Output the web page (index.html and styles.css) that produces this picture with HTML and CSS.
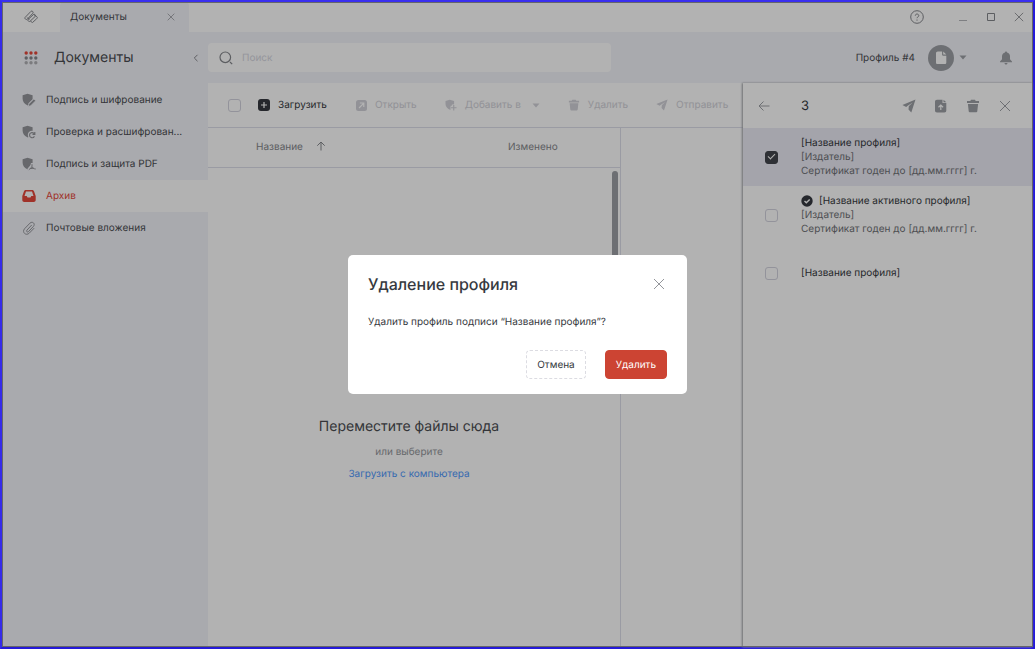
FILE: index.html
```html
<!DOCTYPE html>
<html lang="ru">
<head>
<meta charset="utf-8">
<meta name="viewport" content="width=device-width, initial-scale=1">
<title>Документы</title>
<link rel="stylesheet" href="styles.css">
</head>
<body>
<svg class="sprite" aria-hidden="true">
  <symbol id="shield" viewBox="0 0 14 14"><path d="M5.500 .8 10.600 2.300V6.200L6.300 10.500 7.300 11.600 5.800 12.600C2.500 11 .6 8.800 .6 5.800V2.300Z"/></symbol>
  <symbol id="trash" viewBox="0 0 14 14"><path d="M5 .8h4l.7 1.200H13v2H1V2h3.300zM1.900 5h10.200l-.8 7.200c-.1.700-.6 1.100-1.300 1.100H4c-.7 0-1.200-.4-1.300-1.100z"/></symbol>
  <symbol id="send" viewBox="0 0 14 14"><path d="M13.500.6 9.300 13.400 6.500 10.600 6.800 7.200 10.600 3.400 5.700 6.700 4.200 8 .4 5.900z"/></symbol>
  <symbol id="close" viewBox="0 0 12 12"><path d="m1 1 10 10M11 1 1 11" fill="none" stroke="currentColor"/></symbol>
  <symbol id="caret" viewBox="0 0 8 5"><path d="M.5.500h7L4 4.500z"/></symbol>
</svg>
<div class="app">
  <header class="chrome">
    <button class="home" aria-label="Главная"><svg class="i14 line" viewBox="0 0 14 14"><path d="M1 7.500 7 1.300c1-1 2.900.7 1.900 1.900L3.200 9.300C2.300 10.200.2 8.500 1 7.500zM4 9.500l5.500-5c1-.8 2.700.8 1.800 1.800L6 11.300c-1 .8-2.900-.9-2-1.800zM9.500 4.500l3.300 2.200c1 .8.400 1.600-.2 2.100L8.500 12.500l-2-1.200M3.300 7.500l2 2"/></svg></button>
    <div class="tab"><span>Документы</span><button aria-label="Закрыть вкладку"><svg class="i8"><use href="#close"/></svg></button></div>
    <div class="window-buttons">
      <button class="help" aria-label="Справка"><svg class="i14 line" viewBox="0 0 14 14"><circle cx="7" cy="7" r="6.300"/><path d="M5.300 5.700c0-2.300 3.500-2.100 3.500 0 0 1.200-1.800 1.200-1.800 2.500M7 9.500v1.200"/></svg></button>
      <button class="minimize" aria-label="Свернуть"><svg class="i10 line" viewBox="0 0 10 10"><path d="M1 8.500h8"/></svg></button>
      <button aria-label="Развернуть"><svg class="i10 line" viewBox="0 0 10 10"><path d="M1.500 1.500h7v7h-7z"/></svg></button>
      <button aria-label="Закрыть"><svg class="i10"><use href="#close"/></svg></button>
    </div>
  </header>

  <div class="topbar">
    <div class="brand">
      <button class="apps" aria-label="Приложения"><svg class="i14" viewBox="0 0 14 14"><g fill="#e5483b"><circle cx="2.200" cy="2" r="1.700"/><circle cx="7" cy="2" r="1.700"/><circle cx="11.800" cy="2" r="1.700"/></g><g fill="#85878c"><circle cx="2.200" cy="7" r="1.700"/><circle cx="7" cy="7" r="1.700"/><circle cx="11.800" cy="7" r="1.700"/></g><g fill="#b0b1b5"><circle cx="2.200" cy="11.800" r="1.700"/><circle cx="7" cy="11.800" r="1.700"/><circle cx="11.800" cy="11.800" r="1.700"/></g></svg></button>
      <h1>Документы</h1>
      <button class="collapse" aria-label="Свернуть меню"><svg class="i8 line" viewBox="0 0 8 8"><path d="M5.500.800 2.300 4l3.200 3.200"/></svg></button>
    </div>
    <label class="search"><svg class="i14 line" viewBox="0 0 14 14"><circle cx="6.300" cy="6.300" r="5.300" stroke-width="1.200"/><path stroke-width="1.200" d="m11 11 2.200 2.200"/></svg><input type="search" placeholder="Поиск" aria-label="Поиск"></label>
    <div class="account">
      <button class="profile"><span>Профиль #4</span><span class="avatar"><svg class="i14" viewBox="0 0 14 14"><path fill="#fff" d="M3.800.500h4.300v3c0 .8.400 1.200 1.200 1.200h3v6.800c0 1-.6 1.600-1.600 1.600H3.600c-1 0-1.600-.6-1.600-1.600V2.300C2 1.200 2.800.5 3.800.5zM9.200.5l3.100 3.100H9.200z"/></svg></span><svg class="caret"><use href="#caret"/></svg></button>
      <button aria-label="Уведомления"><svg class="i14" viewBox="0 0 14 14"><path d="M7 .4c.6 0 1 .4 1 1C10 1.900 11 3.400 11 5.300v2.900l2 2.200v.8H1v-.8l2-2.200V5.300c0-1.900 1-3.400 3-3.900 0-.6.400-1 1-1zM5.500 12h3c-.2 2-2.800 2-3 0z"/></svg></button>
    </div>
  </div>

  <nav class="sidebar">
    <a href="#sign"><svg class="i14" viewBox="0 0 14 14"><use href="#shield" width="14" height="14"/><path stroke="#f3f4fa" stroke-width=".8" d="m6.800 10.900 5-5 1.900 1.900-5 5-2.400.6z"/></svg>Подпись и шифрование</a>
    <a href="#verify"><svg class="i14" viewBox="0 0 14 14"><use href="#shield" width="14" height="14"/><circle cx="10" cy="10" r="4.200" fill="#f3f4fa"/><path fill="none" stroke="currentColor" stroke-width="1.200" d="M12.500 9.200c-1-2.500-4.800-2-5 .8 0 3 3.800 3.700 4.900 1.200M12.800 7v2.400h-2.300"/></svg>Проверка и расшифрован...</a>
    <a href="#pdf"><svg class="i14" viewBox="0 0 14 14"><use href="#shield" width="14" height="14"/><path fill="#f3f4fa" d="M9 6h3v3l2 3v2H5.500v-2.500L8 10z"/><path fill="none" stroke="currentColor" d="M10 7.200v2.600l-3.200 3M10 9.800c.8 1.500 2 2 3.700 2.200M8 11.600l4-.4"/></svg>Подпись и защита PDF</a>
    <a class="active" href="#archive" aria-current="page"><svg class="i14" viewBox="0 0 14 14"><path fill-rule="evenodd" d="M4 1h6c1 0 1.600.5 2 1.300L13.700 7v4c0 1.300-.8 2-2 2H2.300c-1.300 0-2-.7-2-2V7L2 2.300C2.400 1.500 3 1 4 1zM4 2.400 2.500 7h2.200l.8 1.500h3L9.300 7h2.200L10 2.400z"/></svg>Архив</a>
    <a href="#mail"><svg class="i14 line" viewBox="0 0 14 14"><path d="m9.700 4-4.800 5.200c-1 1.200.5 2.500 1.600 1.400l5-5.300c2.100-2.500-1-5.500-3.500-3.200L2.500 7.800c-2.900 3.500 1.600 7.500 4.800 4.300l4.900-5"/></svg>Почтовые вложения</a>
  </nav>

  <main class="workspace">
    <div class="toolbar">
      <input type="checkbox" aria-label="Выбрать все">
      <button class="primary"><svg class="i12" viewBox="0 0 12 12"><rect width="12" height="12" rx="3"/><path stroke="#fff" stroke-width="1.200" d="M6 3v6M3 6h6"/></svg>Загрузить</button>
      <button disabled><svg class="i12" viewBox="0 0 12 12"><rect x="1" y="1" width="11" height="11" rx="2.500"/><path fill="none" stroke="#fff" stroke-width="1.200" d="m4 9 4.500-4.500M4.800 4h4v4"/></svg>Открыть</button>
      <button disabled><svg class="i12" viewBox="0 0 14 14"><use href="#shield" width="14" height="14"/><path stroke="#fff" stroke-width="4" d="M10 6.500v7M6.500 10h7"/><path stroke="currentColor" stroke-width="1.300" d="M10.200 7v6.500M7 10.200h6.500"/></svg>Добавить в<svg class="caret"><use href="#caret"/></svg></button>
      <button disabled><svg class="i12"><use href="#trash"/></svg>Удалить</button>
      <button disabled><svg class="i12"><use href="#send"/></svg>Отправить</button>
    </div>
    <div class="content">
      <section class="files">
        <table><thead><tr><th class="name">Название<svg class="i10 line" viewBox="0 0 10 10"><path d="M5 9.500V1M1.300 4.700 5 1l3.700 3.700"/></svg></th><th>Изменено</th></tr></thead></table>
        <div class="drop">
          <svg class="drop-icon" viewBox="0 0 60 60"><path fill="#f3f4fa" stroke="#85878c" stroke-width="2" d="M14 2h22l12 12v44H14z"/></svg>
          <h2>Переместите файлы сюда</h2>
          <p>или выберите</p>
          <a href="#upload">Загрузить с компьютера</a>
          <div class="scrollbar"></div>
        </div>
      </section>
      <section class="preview"></section>
    </div>
  </main>

  <aside class="profiles">
    <header>
      <button aria-label="Назад"><svg class="i12 line" viewBox="0 0 12 12"><path d="M11.500 6H1M5.500 1.500 1 6l4.500 4.500"/></svg></button>
      <span class="count">3</span>
      <button aria-label="Отправить"><svg class="i14"><use href="#send"/></svg></button>
      <button aria-label="Экспорт"><svg class="i14" viewBox="0 0 14 14"><path d="M3 .8h5.500v3.300h3.800v7.300c0 1.300-.7 2-2 2H3c-1.300 0-2-.7-2-2V2.800c0-1.300.7-2 2-2zM9.500.8l2.800 2.500H9.500z"/><path fill="none" stroke="#fff" stroke-width="1.200" d="M6.800 11V6.500M4.500 8.300l2.300-2.200 2.300 2.200"/></svg></button>
      <button aria-label="Удалить"><svg class="i14"><use href="#trash"/></svg></button>
      <button aria-label="Закрыть панель"><svg class="i14" viewBox="0 0 14 14"><use href="#close" x="1" y="1" width="12" height="12"/></svg></button>
    </header>
    <label class="entry selected"><input type="checkbox" checked><span class="info"><strong>[Название профиля]</strong><span>[Издатель]</span><span>Сертификат годен до [дд.мм.гггг] г.</span></span></label>
    <label class="entry"><input type="checkbox"><span class="info"><strong><svg class="i12" viewBox="0 0 12 12"><circle cx="6" cy="6" r="5.700"/><path fill="none" stroke="#fff" stroke-width="1.400" d="m3.500 6 1.800 1.800 3.400-3.400"/></svg>[Название активного профиля]</strong><span>[Издатель]</span><span>Сертификат годен до [дд.мм.гггг] г.</span></span></label>
    <label class="entry"><input type="checkbox"><span class="info"><strong>[Название профиля]</strong></span></label>
  </aside>

  <div class="backdrop">
    <div class="modal" role="dialog" aria-modal="true" aria-labelledby="dialog-title">
      <div class="modal-head"><h2 id="dialog-title">Удаление профиля</h2><button aria-label="Закрыть"><svg class="i12"><use href="#close"/></svg></button></div>
      <p>Удалить профиль подписи “Название профиля”?</p>
      <div class="modal-actions"><button class="cancel">Отмена</button><button class="danger">Удалить</button></div>
    </div>
  </div>
</div>
</body>
</html>
```
FILE: styles.css
```css
* { box-sizing: border-box; }
body { margin: 0; font-family: Inter, "Liberation Sans", sans-serif; font-size: 10px; line-height: 14px; color: #4b4d52; text-rendering: geometricPrecision; }
h1, h2, p { margin: 0; font-weight: 400; }
button { display: flex; align-items: center; padding: 0; border: 0; background: none; font: inherit; color: inherit; text-rendering: inherit; }
a { color: inherit; text-decoration: none; }
svg { display: block; flex: none; fill: currentColor; }
.sprite { position: absolute; width: 0; height: 0; }
.line { fill: none; stroke: currentColor; }
.i8 { width: 8px; height: 8px; }
.i10 { width: 10px; height: 10px; }
.i12 { width: 12px; height: 12px; }
.i14 { width: 14px; height: 14px; }
.caret { width: 8px; height: 5px; }
input[type="checkbox"] { appearance: none; flex: none; width: 13px; height: 13px; margin: 0; border: 1px solid #d3d3de; border-radius: 3px; }
input[type="checkbox"]:checked { border-color: #43464c; background: #43464c; display: grid; place-items: center; }
input[type="checkbox"]:checked::after { content: ""; width: 6px; height: 3px; border: solid #fff; border-width: 0 0 1px 1px; transform: rotate(-45deg) translate(1px, -1px); }

.app { position: relative; display: grid; grid-template: 30px 51px 1fr / 206px 1fr 290px; min-height: 100vh; border: 2px solid #352be6; border-color: #392ff0 #251ad8 #251ad8 #352bea; background: #f3f4fa; }

.chrome { grid-column: 1 / -1; display: flex; background: #fff; color: #85878c; }
.home { justify-content: center; width: 58px; }
.tab { display: flex; align-items: center; justify-content: space-between; width: 129px; padding: 0 14px 0 10px; border-radius: 4px 4px 0 0; background: #f3f4fa; color: #4b4d52; }
.tab button { color: #85878c; }
.window-buttons { display: flex; align-items: center; gap: 18px; margin-left: auto; padding-right: 9px; }
.help { margin-right: 16px; }
.minimize { color: #b5b6bb; }

.topbar { grid-column: 1 / -1; display: flex; align-items: center; }
.brand { display: flex; align-items: center; width: 206px; padding: 0 8px 0 22px; }
.brand h1 { margin-left: 16px; font-size: 14px; line-height: 20px; }
.collapse { margin-left: auto; color: #85878c; }
.search { display: flex; align-items: center; gap: 9px; width: 403px; height: 29px; padding: 0 11px; border-radius: 4px; background: #fff; color: #85878c; }
.search input { flex: 1; min-width: 0; padding: 0; border: 0; outline: 0; background: none; font: inherit; text-rendering: inherit; }
.search input::placeholder { color: #d5d6e0; }
.account { display: flex; align-items: center; gap: 32px; margin-left: auto; padding-right: 20px; color: #9da0a5; }
.profile > span:first-child { color: #4b4d52; }
.avatar { display: grid; place-items: center; width: 26px; height: 26px; margin: 0 5px 0 13px; border-radius: 50%; background: #9da0a5; }

.sidebar { padding-top: 1px; }
.sidebar a { display: flex; align-items: center; gap: 10px; height: 32px; padding-left: 20px; white-space: nowrap; }
.sidebar svg { color: #94969b; }
.sidebar .active, .sidebar .active svg { color: #e5483b; }
.sidebar .active { background: #fff; }

.workspace { display: flex; flex-direction: column; min-width: 0; background: #fff; }
.toolbar { display: flex; align-items: center; gap: 28px; height: 45px; padding-left: 20px; border-bottom: 1px solid #dddeea; white-space: nowrap; }
.toolbar button { gap: 8px; }
.toolbar .primary { margin-left: -11px; color: #363940; }
.toolbar button:disabled { color: #d1d1d8; }
.toolbar .caret { margin-left: 3px; }
.content { display: grid; grid-template-columns: 1fr 122px; flex: 1; }
.files { display: flex; flex-direction: column; border-right: 1px solid #dddeea; }
.files table { width: 100%; border-collapse: collapse; color: #85878c; }
.files th { height: 39px; padding: 0; border-bottom: 1px solid #dddeea; font-weight: 400; text-align: left; }
.files .name { width: 300px; padding-left: 48px; }
.name svg { display: inline-block; margin-left: 13px; vertical-align: -1px; }
.drop { position: relative; flex: 1; display: flex; flex-direction: column; align-items: center; justify-content: center; padding-right: 10px; }
.drop-icon { width: 60px; height: 60px; margin-bottom: 24px; }
.drop h2 { font-size: 14px; line-height: 20px; }
.drop p { margin: 8px 0; color: #94969b; }
.drop a { color: #4f98fc; }
.scrollbar { position: absolute; top: 3px; right: 2px; width: 6px; height: 144px; border-radius: 3px; background: #9da0a5; }

.profiles { z-index: 1; background: #fff; box-shadow: -1px 0 2px #9da0a5; }
.profiles header { display: flex; align-items: center; gap: 18px; height: 45px; padding: 0 21px 0 15px; color: #9da0a5; }
.count { flex: 1; margin-left: 13px; font-size: 13px; color: #363940; }
.entry { display: flex; align-items: center; gap: 23px; height: 58px; padding-left: 22px; color: #6f7176; }
.selected { background: #ebebf5; }
.info { display: flex; flex-direction: column; }
.info strong { display: flex; align-items: center; gap: 6px; font-weight: 400; color: #363940; }

.backdrop { position: absolute; inset: 0; z-index: 2; display: grid; place-items: center; border: 1px solid #66666a; background: rgba(0, 0, 0, .3); }
.modal { width: 339px; padding: 19px 20px 15px; border-radius: 5px; background: #fff; color: #363940; }
.modal-head { display: flex; align-items: center; justify-content: space-between; }
.modal h2 { font-size: 16px; font-weight: 500; line-height: 20px; }
.modal-head button { padding-right: 2px; color: #94969b; }
.modal p { margin: 21px 0; }
.modal-actions { display: flex; justify-content: flex-end; gap: 19px; }
.modal-actions button { height: 29px; padding: 0 10px; border: 1px solid #cc4433; border-radius: 4px; }
.modal-actions .cancel { border: 1px dashed #dcdce2; }
.modal-actions .danger { background: #cc4433; color: #fff; }
```
